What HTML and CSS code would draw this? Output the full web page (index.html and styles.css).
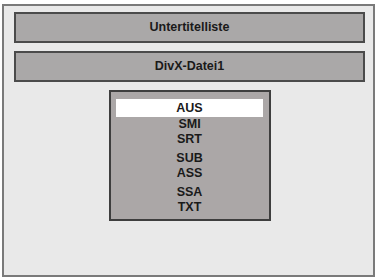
FILE: index.html
```html
<!DOCTYPE html>
<html>
<head>
<meta charset="utf-8">
<link rel="stylesheet" href="styles.css">
</head>
<body>
<div class="frame">
  <div class="bar">Untertitelliste</div>
  <div class="bar">DivX-Datei1</div>
  <div class="list">
    <div class="item sel">AUS</div>
    <div class="group">
      <div class="item">SMI</div>
      <div class="item">SRT</div>
    </div>
    <div class="group">
      <div class="item">SUB</div>
      <div class="item">ASS</div>
    </div>
    <div class="group">
      <div class="item">SSA</div>
      <div class="item">TXT</div>
    </div>
  </div>
</div>
</body>
</html>
```
FILE: styles.css
```css
html, body {
  margin: 0;
  padding: 0;
  background: #ffffff;
}
body {
  font-family: "Liberation Sans", Arial, sans-serif;
  font-weight: bold;
  color: #1a1a1a;
}
.frame {
  box-sizing: border-box;
  margin: 4px 0 0 2px;
  width: 373px;
  height: 273px;
  border: 2px solid #7a7a7a;
  background: #e9e9e9;
  padding: 6px 8px 0 10px;
  display: flex;
  flex-direction: column;
  gap: 8px;
}
.bar {
  box-sizing: border-box;
  width: 351px;
  height: 31px;
  border: 2px solid #4b4b4b;
  background: #aaa8a8;
  font-size: 12.5px;
  line-height: 27px;
  text-align: center;
}
.list {
  box-sizing: border-box;
  margin-left: 95px;
  width: 162px;
  height: 131px;
  border: 2px solid #3e3e3e;
  background: #aba7a7;
  padding: 7px 6px 4px 5px;
  display: flex;
  flex-direction: column;
  gap: 4px;
}
.group {
  display: flex;
  flex-direction: column;
}
.item {
  font-size: 12.5px;
  line-height: 15px;
  height: 15px;
  text-align: center;
}
.item.sel {
  background: #ffffff;
  height: 18px;
  line-height: 18px;
  margin-bottom: -4px;
}
```
